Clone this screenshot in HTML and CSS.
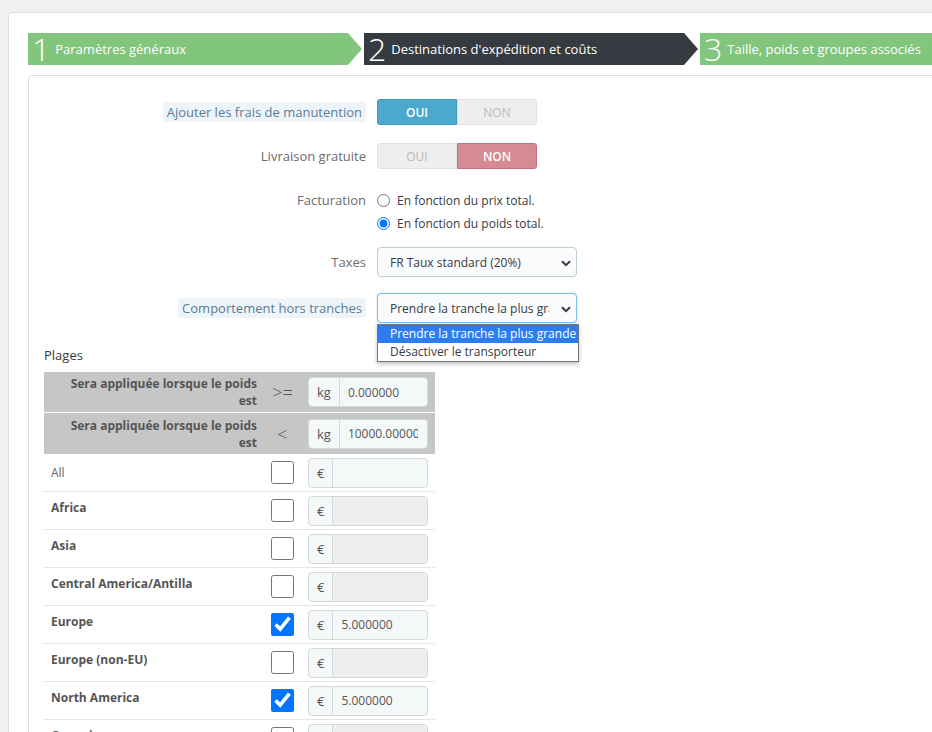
FILE: index.html
```html
<!DOCTYPE html>
<html lang="fr">
<head>
  <meta charset="UTF-8" />
  <meta name="viewport" content="width=device-width, initial-scale=1" />
  <title>Transporteur - Destinations d'expédition et coûts</title>
  <link rel="stylesheet" href="styles.css">
</head>
<body>
  <div class="page">
    <div class="wizard">
      <ul class="steps">
        <li class="step step--done">
          <span class="step__num">1</span>
          <span class="step__label">Paramètres généraux</span>
        </li>
        <li class="step step--current">
          <span class="step__num">2</span>
          <span class="step__label">Destinations d'expédition et coûts</span>
        </li>
        <li class="step step--done">
          <span class="step__num">3</span>
          <span class="step__label">Taille, poids et groupes associés</span>
        </li>
      </ul>

      <div class="step-panel">
        <div class="form-row">
          <div class="form-label"><span class="label-hint">Ajouter les frais de manutention</span></div>
          <div class="switch">
            <span class="switch__opt switch__opt--yes is-on">OUI</span>
            <span class="switch__opt">NON</span>
          </div>
        </div>

        <div class="form-row">
          <div class="form-label">Livraison gratuite</div>
          <div class="switch">
            <span class="switch__opt">OUI</span>
            <span class="switch__opt switch__opt--no is-on">NON</span>
          </div>
        </div>

        <div class="form-row form-row--top">
          <div class="form-label form-label--line">Facturation</div>
          <div class="radio-list">
            <label class="radio-item"><input type="radio" name="billing" /> En fonction du prix total.</label>
            <label class="radio-item"><input type="radio" name="billing" checked /> En fonction du poids total.</label>
          </div>
        </div>

        <div class="form-row form-row--taxes">
          <div class="form-label">Taxes</div>
          <div class="select">
            <span class="select__text">FR Taux standard (20%)</span>
            <svg class="select__chevron" width="10" height="7" viewBox="0 0 10 7"><path d="M1 1.2l4 4 4-4" fill="none" stroke="#363a41" stroke-width="2"/></svg>
          </div>
        </div>

        <div class="form-row">
          <div class="form-label"><span class="label-hint">Comportement hors tranches</span></div>
          <div class="select-wrap">
            <div class="select select--focus">
              <span class="select__text">Prendre la tranche la plus grande</span>
              <svg class="select__chevron" width="10" height="7" viewBox="0 0 10 7"><path d="M1 1.2l4 4 4-4" fill="none" stroke="#363a41" stroke-width="2"/></svg>
            </div>
            <ul class="dropdown">
              <li class="dropdown__opt is-active">Prendre la tranche la plus grande</li>
              <li class="dropdown__opt">Désactiver le transporteur</li>
            </ul>
          </div>
        </div>

        <div class="ranges">
          <div class="ranges__title">Plages</div>
          <div class="range-head">
            <div class="range-head__label">Sera appliquée lorsque le poids est</div>
            <div class="range-head__sign">&gt;=</div>
            <div class="cell-input">
              <div class="input-group"><span class="addon">kg</span><span class="field"><span class="field__val">0.000000</span></span></div>
            </div>
          </div>
          <div class="range-head range-head--sep">
            <div class="range-head__label">Sera appliquée lorsque le poids est</div>
            <div class="range-head__sign">&lt;</div>
            <div class="cell-input">
              <div class="input-group"><span class="addon">kg</span><span class="field"><span class="field__val">10000.000000</span></span></div>
            </div>
          </div>

          <div class="zone-row">
            <div class="zone-name">All</div>
            <div class="cell-check"><input type="checkbox" /></div>
            <div class="cell-input"><div class="input-group"><span class="addon">€</span><span class="field"></span></div></div>
          </div>
          <div class="zone-row">
            <div class="zone-name zone-name--bold">Africa</div>
            <div class="cell-check"><input type="checkbox" /></div>
            <div class="cell-input"><div class="input-group"><span class="addon">€</span><span class="field field--off"></span></div></div>
          </div>
          <div class="zone-row">
            <div class="zone-name zone-name--bold">Asia</div>
            <div class="cell-check"><input type="checkbox" /></div>
            <div class="cell-input"><div class="input-group"><span class="addon">€</span><span class="field field--off"></span></div></div>
          </div>
          <div class="zone-row">
            <div class="zone-name zone-name--bold">Central America/Antilla</div>
            <div class="cell-check"><input type="checkbox" /></div>
            <div class="cell-input"><div class="input-group"><span class="addon">€</span><span class="field field--off"></span></div></div>
          </div>
          <div class="zone-row">
            <div class="zone-name zone-name--bold">Europe</div>
            <div class="cell-check"><input type="checkbox" checked /></div>
            <div class="cell-input"><div class="input-group"><span class="addon">€</span><span class="field"><span class="field__val">5.000000</span></span></div></div>
          </div>
          <div class="zone-row">
            <div class="zone-name zone-name--bold">Europe (non-EU)</div>
            <div class="cell-check"><input type="checkbox" /></div>
            <div class="cell-input"><div class="input-group"><span class="addon">€</span><span class="field field--off"></span></div></div>
          </div>
          <div class="zone-row">
            <div class="zone-name zone-name--bold">North America</div>
            <div class="cell-check"><input type="checkbox" checked /></div>
            <div class="cell-input"><div class="input-group"><span class="addon">€</span><span class="field"><span class="field__val">5.000000</span></span></div></div>
          </div>
          <div class="zone-row">
            <div class="zone-name zone-name--bold">Oceania</div>
            <div class="cell-check"><input type="checkbox" /></div>
            <div class="cell-input"><div class="input-group"><span class="addon">€</span><span class="field field--off"></span></div></div>
          </div>
        </div>
      </div>
    </div>
  </div>
</body>
</html>
```

FILE: styles.css
```css
html,
body {
  margin: 0;
  overflow: hidden;
}
body {
  font-family: 'Open Sans', 'Liberation Sans', sans-serif;
  background-color: #eff1f2;
  color: #363a41;
}
.page {
  height: 732px;
  padding: 12px 0 0 8px;
  box-sizing: border-box;
  overflow: hidden;
}

/* cadre principal */
.wizard {
  width: 1100px;
  height: 900px;
  background: #fff;
  border: 1px solid #dadee1;
  border-radius: 5px;
  padding: 20px 0 0 19px;
  box-sizing: border-box;
}

/* étapes */
.steps {
  display: flex;
  gap: 2px;
  list-style: none;
  margin: 0;
  padding: 0;
  height: 32px;
}
.step {
  flex: 0 0 334px;
  display: flex;
  align-items: center;
  padding-left: 4px;
  box-sizing: border-box;
  color: #fff;
  clip-path: polygon(0 0, calc(100% - 14px) 0, 100% 50%, calc(100% - 14px) 100%, 0 100%);
}
.step--done {
  background: #82c57c;
}
.step--current {
  background: #363a41;
}
.step__num {
  font-size: 32px;
  font-weight: 300;
  line-height: 32px;
}
.step__label {
  font-size: 13px;
  margin-left: 5px;
}

/* panneau du formulaire */
.step-panel {
  display: flex;
  flex-direction: column;
  margin-top: 10px;
  border: 1px solid #dcdfe3;
  border-radius: 4px;
  padding-top: 23px;
  height: 800px;
  box-sizing: border-box;
}
.form-row {
  display: flex;
  align-items: center;
  gap: 11px;
  margin-bottom: 18px;
}
.form-row--top {
  align-items: flex-start;
  margin-top: 2px;
  margin-bottom: 12px;
}
.form-row--taxes {
  margin-bottom: 16px;
}
.form-label {
  width: 337px;
  text-align: right;
  font-size: 13px;
  color: #6c6c6c;
}
.form-label--line {
  line-height: 23px;
}
.label-hint {
  display: inline-block;
  background: #edf5fb;
  color: #5d7b93;
  padding: 1px 4px;
  line-height: 18px;
}

/* interrupteur OUI / NON */
.switch {
  display: flex;
  width: 160px;
  height: 26px;
}
.switch__opt {
  flex: 1;
  display: flex;
  align-items: center;
  justify-content: center;
  font-size: 12px;
  color: #bbb;
  background: #eee;
  border: 1px solid #e2e2e2;
  box-sizing: border-box;
}
.switch__opt:first-child {
  border-radius: 3px 0 0 3px;
}
.switch__opt:last-child {
  border-radius: 0 3px 3px 0;
}
.switch__opt.is-on {
  color: #fff;
  font-weight: 600;
}
.switch__opt--yes.is-on {
  background: #4ba9cc;
  border-color: #3f9abd;
}
.switch__opt--no.is-on {
  background: #d68a91;
  border-color: #c5727a;
}

/* boutons radio */
.radio-list {
  display: flex;
  flex-direction: column;
}
.radio-item {
  display: flex;
  align-items: center;
  height: 23px;
  font-size: 12px;
  color: #363a41;
}
.radio-item input {
  margin: 0 7px 0 0;
  width: 13px;
  height: 13px;
}

/* listes déroulantes */
.select-wrap {
  position: relative;
}
.select {
  position: relative;
  display: flex;
  align-items: center;
  width: 200px;
  height: 30px;
  box-sizing: border-box;
  border: 1px solid #bbcdd2;
  border-radius: 4px;
  background: #fafbfc;
  padding: 0 27px 0 12px;
  font-size: 12px;
  color: #363a41;
}
.select--focus {
  border-color: #7cc1df;
  box-shadow: 0 0 2px rgba(124, 193, 223, 0.6);
}
.select__text {
  white-space: nowrap;
  overflow: hidden;
}
.select__chevron {
  position: absolute;
  right: 5px;
  top: 12px;
}
.dropdown {
  position: absolute;
  top: 31px;
  left: 0;
  width: 200px;
  margin: 0;
  padding: 0;
  list-style: none;
  background: #fff;
  border: 1px solid #767676;
  box-shadow: 0 2px 4px rgba(0, 0, 0, 0.25);
  z-index: 2;
}
.dropdown__opt {
  height: 18px;
  line-height: 18px;
  padding-left: 12px;
  font-size: 12px;
  color: #363a41;
  white-space: nowrap;
  overflow: hidden;
}
.dropdown__opt.is-active {
  background: #2c7ef0;
  color: #fff;
}

/* plages et zones */
.ranges {
  width: 391px;
  margin: 5px 0 0 15px;
}
.ranges__title {
  font-size: 13px;
  line-height: 18px;
  margin-bottom: 8px;
}
.range-head,
.zone-row {
  display: grid;
  grid-template-columns: 218px 41px 132px;
  align-items: center;
}
.range-head {
  height: 40px;
  background: #c6c6c6;
}
.range-head--sep {
  height: 41px;
  border-top: 1px solid #fff;
}
.range-head__label {
  text-align: right;
  padding: 0 5px 0 20px;
  font-size: 12px;
  font-weight: 700;
  line-height: 17px;
  color: #555;
}
.range-head__sign {
  text-align: center;
  font-size: 18px;
  font-weight: 300;
  color: #555;
}
.cell-input {
  padding-left: 5px;
}
.input-group {
  display: flex;
  width: 120px;
  height: 30px;
  box-sizing: border-box;
  border: 1px solid #d3d8db;
  border-radius: 4px;
  overflow: hidden;
  background: #f5f8f9;
}
.addon {
  display: flex;
  align-items: center;
  padding: 0 8px;
  border-right: 1px solid #d3d8db;
  font-size: 13px;
  color: #555;
}
.field {
  flex: 1;
  min-width: 0;
  display: flex;
  align-items: center;
  padding: 0 9px 0 8px;
  font-size: 12px;
  color: #555;
}
.field__val {
  white-space: nowrap;
  overflow: hidden;
}
.field--off {
  background: #eee;
}
.zone-row {
  height: 38px;
  box-sizing: border-box;
  border-bottom: 1px solid #e5e5e5;
}
.zone-name {
  padding-left: 7px;
  font-size: 12px;
  color: #666;
}
.zone-name--bold {
  font-weight: 700;
  color: #555;
  margin-top: -6px;
}
.cell-check {
  display: flex;
  justify-content: center;
}
.cell-check input {
  width: 23px;
  height: 23px;
  margin: 0;
}
```
